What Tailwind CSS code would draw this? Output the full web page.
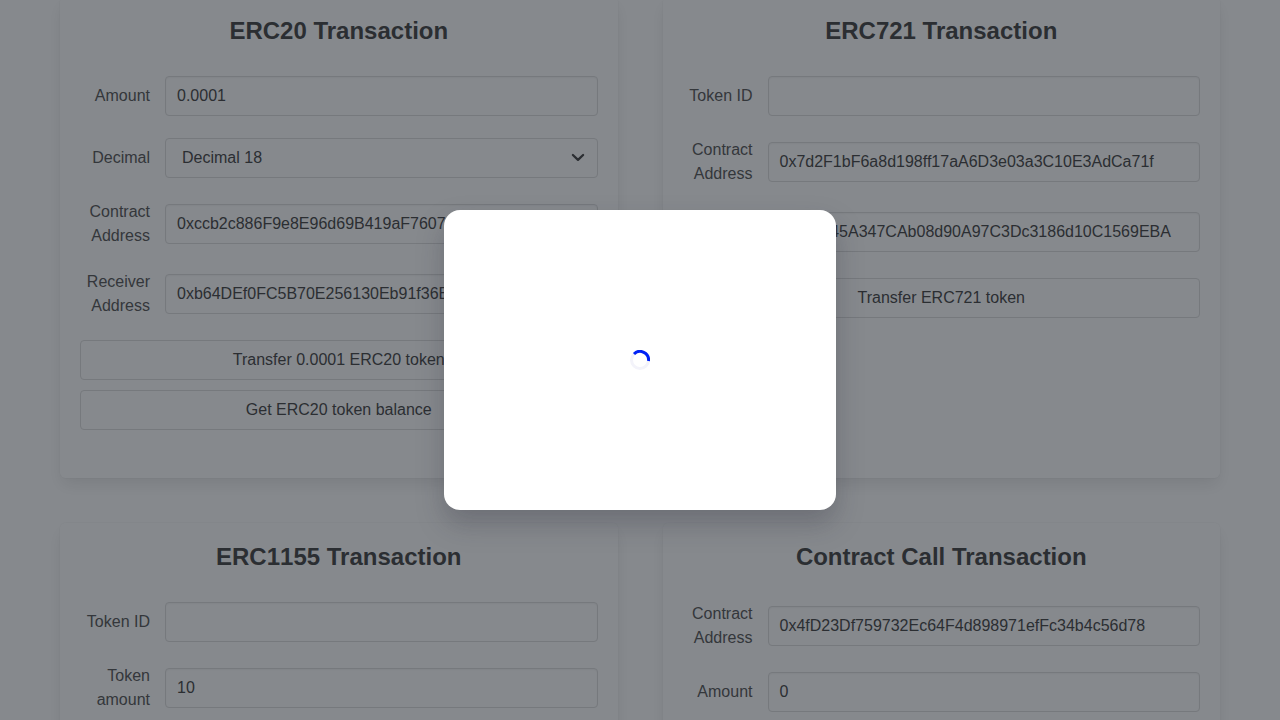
<!DOCTYPE html>
<html lang="en" class="overflow-hidden">
<head>
<meta charset="utf-8">
<title>Transactions</title>
<script src="https://cdn.jsdelivr.net/npm/@tailwindcss/browser@4"></script>
<style>
body{font-family:"Liberation Sans",Arial,sans-serif}
.box{box-shadow:0 8px 16px -2px rgba(10,10,10,.1),0 0 0 1px rgba(10,10,10,.02)}
.field{box-shadow:inset 0 1px 2px rgba(10,10,10,.05)}
</style>
</head>
<body class="h-[720px] overflow-hidden bg-white text-base text-[#4a4a4a]">
<main class="-mt-[3px] grid grid-cols-2 gap-[45px] px-[60px]">
  <section class="box flex h-[481px] flex-col rounded-md p-5">
    <h2 class="mb-[31px] text-center text-2xl leading-7 font-bold text-[#363636]">ERC20 Transaction</h2>
    <div class="flex flex-col gap-[22px]">
      <div class="flex items-center gap-[15px]"><label class="w-[70px] shrink-0 text-right">Amount</label><div class="field h-10 min-w-0 flex-1 overflow-hidden rounded border border-[#dbdbdb] px-[11px] leading-[38px] text-[#363636]">0.0001</div></div>
      <div class="flex items-center gap-[15px]"><label class="w-[70px] shrink-0 text-right">Decimal</label><div class="flex h-10 min-w-0 flex-1 items-center justify-between rounded border border-[#dbdbdb] pr-[11px] pl-4 leading-[38px] text-[#363636]"><span>Decimal 18</span><svg class="h-4 w-4" viewBox="0 0 16 16" fill="none" stroke="#363636" stroke-width="2.3" stroke-linecap="round" stroke-linejoin="round"><path d="m2.9 5 5.1 4.9L13.1 5"/></svg></div></div>
      <div class="flex items-center gap-[15px]"><label class="w-[70px] shrink-0 text-right">Contract Address</label><div class="field h-10 min-w-0 flex-1 overflow-hidden rounded border border-[#dbdbdb] px-[11px] leading-[38px] text-[#363636]">0xccb2c886F9e8E96d69B419aF7607</div></div>
      <div class="flex items-center gap-[15px]"><label class="w-[70px] shrink-0 text-right">Receiver Address</label><div class="field h-10 min-w-0 flex-1 overflow-hidden rounded border border-[#dbdbdb] px-[11px] leading-[38px] text-[#363636]">0xb64DEf0FC5B70E256130Eb91f36E</div></div>
      <div class="flex flex-col gap-[10px]">
        <button class="h-10 rounded border border-[#dbdbdb] text-[#363636]">Transfer 0.0001 ERC20 token</button>
        <button class="h-10 rounded border border-[#dbdbdb] text-[#363636]">Get ERC20 token balance</button>
      </div>
    </div>
  </section>
  <section class="box flex h-[481px] flex-col rounded-md p-5">
    <h2 class="mb-[31px] text-center text-2xl leading-7 font-bold text-[#363636]">ERC721 Transaction</h2>
    <div class="flex flex-col gap-[22px]">
      <div class="flex items-center gap-[15px]"><label class="w-[70px] shrink-0 text-right">Token ID</label><div class="field h-10 min-w-0 flex-1 rounded border border-[#dbdbdb]"></div></div>
      <div class="flex items-center gap-[15px]"><label class="w-[70px] shrink-0 text-right">Contract Address</label><div class="field h-10 min-w-0 flex-1 overflow-hidden rounded border border-[#dbdbdb] px-[11px] leading-[38px] text-[#363636]">0x7d2F1bF6a8d198ff17aA6D3e03a3C10E3AdCa71f</div></div>
      <div class="flex items-center gap-[15px]"><label class="w-[70px] shrink-0 text-right">Receiver Address</label><div class="field h-10 min-w-0 flex-1 overflow-hidden rounded border border-[#dbdbdb] px-[11px] leading-[38px] text-[#363636]">0x80cc45A347CAb08d90A97C3Dc3186d10C1569EBA</div></div>
      <button class="h-10 rounded border border-[#dbdbdb] text-[#363636]">Transfer ERC721 token</button>
    </div>
  </section>
  <section class="box flex h-[481px] flex-col rounded-md p-5">
    <h2 class="mb-[31px] text-center text-2xl leading-7 font-bold text-[#363636]">ERC<span class="[font-kerning:none]">1155</span> Transaction</h2>
    <div class="flex flex-col gap-[22px]">
      <div class="flex items-center gap-[15px]"><label class="w-[70px] shrink-0 text-right">Token ID</label><div class="field h-10 min-w-0 flex-1 rounded border border-[#dbdbdb]"></div></div>
      <div class="flex items-center gap-[15px]"><label class="w-[70px] shrink-0 text-right">Token amount</label><div class="field h-10 min-w-0 flex-1 overflow-hidden rounded border border-[#dbdbdb] px-[11px] leading-[38px] text-[#363636]">10</div></div>
    </div>
  </section>
  <section class="box flex h-[481px] flex-col rounded-md p-5">
    <h2 class="mb-[31px] text-center text-2xl leading-7 font-bold text-[#363636]">Contract Call Transaction</h2>
    <div class="flex flex-col gap-[22px]">
      <div class="flex items-center gap-[15px]"><label class="w-[70px] shrink-0 text-right">Contract Address</label><div class="field h-10 min-w-0 flex-1 overflow-hidden rounded border border-[#dbdbdb] px-[11px] leading-[38px] text-[#363636]">0x4fD23Df759732Ec64F4d898971efFc34b4c56d78</div></div>
      <div class="flex items-center gap-[15px]"><label class="w-[70px] shrink-0 text-right">Amount</label><div class="field h-10 min-w-0 flex-1 overflow-hidden rounded border border-[#dbdbdb] px-[11px] leading-[38px] text-[#363636]">0</div></div>
    </div>
  </section>
</main>
<div class="fixed inset-0 flex items-center justify-center bg-[#232830]/55">
  <div class="flex h-[300px] w-[392px] items-center justify-center rounded-2xl bg-white shadow-[0_14px_28px_rgba(33,35,50,0.26)]">
    <svg class="h-5 w-5" viewBox="0 0 20 20" fill="none" stroke-width="3"><circle cx="10" cy="10" r="8.5" stroke="#f3f3fa"/><path stroke="#0022f5" d="M4 4A8.5 8.5 0 0 1 18.5 11"/></svg>
  </div>
</div>
</body>
</html>
